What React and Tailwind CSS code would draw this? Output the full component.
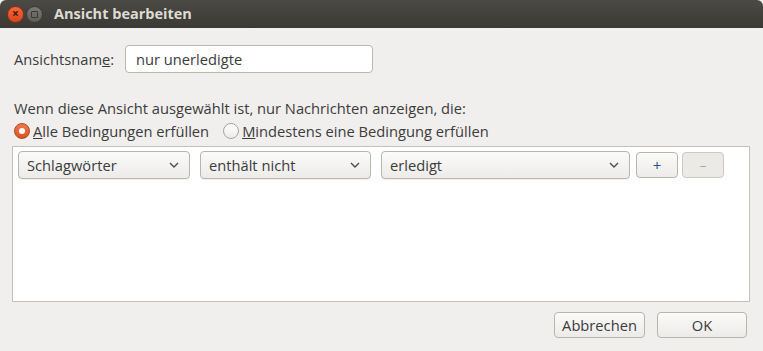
import React from "react";

function Chevron() {
  return (
    <svg width="10" height="6" viewBox="0 0 10 6" className="shrink-0">
      <path d="M1 1 L5 5 L9 1" fill="none" stroke="#4c4c4c" strokeWidth="1.4" />
    </svg>
  );
}

function Select({ w, label }) {
  return (
    <div
      className={`${w} h-[28px] flex items-center justify-between pl-[8px] pr-[10px] rounded-[4px] border border-[#b8b4ae] bg-gradient-to-b from-[#fbfbfa] to-[#ecebe9] shadow-[0_1px_0_rgba(0,0,0,0.06)]`}
    >
      <span>{label}</span>
      <Chevron />
    </div>
  );
}

export default function App() {
  return (
    <div
      className="w-[763px] h-[351px] bg-[#f0efed] text-[#3c3c3c] text-[14.7px] flex flex-col overflow-hidden"
      style={{ fontFamily: '"Open Sans", "Noto Sans", sans-serif' }}
    >
      {/* Title bar */}
      <div className="h-[28px] shrink-0 flex items-center bg-gradient-to-b from-[#4b4a45] to-[#3a3935] rounded-t-[6px] pl-[7px]">
        <div className="w-[17px] h-[17px] rounded-full bg-gradient-to-b from-[#f2683c] to-[#d9441a] border border-[#8f2e10] flex items-center justify-center text-[#4a1606] text-[12px] leading-none font-bold">
          ×
        </div>
        <div className="ml-[2px] w-[17px] h-[17px] rounded-full bg-gradient-to-b from-[#7a7974] to-[#5e5d59] border border-[#3a3936] flex items-center justify-center">
          <div className="w-[7px] h-[7px] border-[1.5px] border-[#3a3936] rounded-[1px]" />
        </div>
        <span className="ml-[11px] text-[#dfdbd2] font-bold text-[14.5px]">Ansicht bearbeiten</span>
      </div>

      {/* Body */}
      <div className="flex-1 flex flex-col pl-[12px] pr-[14px]">
        <div className="mt-[17px] flex items-center h-[28px]">
          <span className="ml-[2px] w-[111px]">
            Ansichtsnam<span className="underline">e</span>:
          </span>
          <div className="w-[248px] h-[28px] rounded-[4px] border border-[#bab6b0] bg-white flex items-center pl-[10px]">
            nur unerledigte
          </div>
        </div>

        <div className="mt-[25px] ml-[2px] leading-[20px]">
          Wenn diese Ansicht ausgewählt ist, nur Nachrichten anzeigen, die:
        </div>

        <div className="mt-[3px] flex items-center h-[20px] ml-[2px]">
          <div className="w-[16px] h-[16px] rounded-full bg-gradient-to-b from-[#f0784a] to-[#d9541f] border border-[#b3461c] flex items-center justify-center">
            <div className="w-[6px] h-[6px] rounded-full bg-white" />
          </div>
          <span className="ml-[3px]">
            <span className="underline">A</span>lle Bedingungen erfüllen
          </span>
          <div className="ml-[14px] w-[16px] h-[16px] rounded-full bg-gradient-to-b from-white to-[#ecebe9] border border-[#a9a59f]" />
          <span className="ml-[3px]">
            <span className="underline">M</span>indestens eine Bedingung erfüllen
          </span>
        </div>

        <div className="mt-[5px] w-[738px] h-[156px] bg-white border border-[#c4c0ba] pt-[4px] pl-[5px]">
          <div className="flex items-center">
            <Select w="w-[172px]" label="Schlagwörter" />
            <div className="w-[10px]" />
            <Select w="w-[171px]" label="enthält nicht" />
            <div className="w-[10px]" />
            <Select w="w-[249px]" label="erledigt" />
            <div className="ml-[6px] w-[42px] h-[26px] rounded-[4px] border border-[#b8b4ae] bg-gradient-to-b from-[#fbfbfa] to-[#ecebe9] flex items-center justify-center text-[#2f4f80] text-[15px] leading-none">
              +
            </div>
            <div className="ml-[4px] w-[42px] h-[26px] rounded-[4px] border border-[#ccc8c2] bg-[#eceae7] flex items-center justify-center text-[#a8a49e] text-[13px] leading-none">
              –
            </div>
          </div>
        </div>

        <div className="mt-[10px] flex justify-end gap-[12px] pr-[2px]">
          <div className="w-[91px] h-[26px] rounded-[4px] border border-[#b8b4ae] bg-gradient-to-b from-[#fbfbfa] to-[#ecebe9] flex items-center justify-center">
            Abbrechen
          </div>
          <div className="w-[90px] h-[26px] rounded-[4px] border border-[#b8b4ae] bg-gradient-to-b from-[#fbfbfa] to-[#ecebe9] flex items-center justify-center">
            OK
          </div>
        </div>
      </div>
    </div>
  );
}
